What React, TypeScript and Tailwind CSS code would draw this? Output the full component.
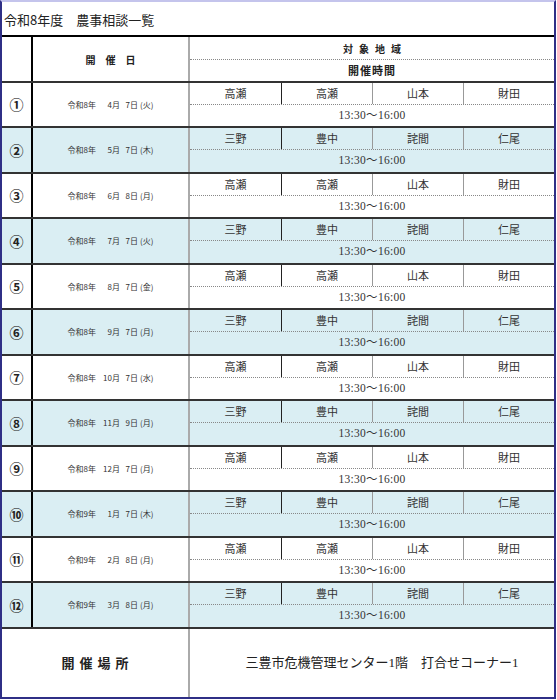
const sans = "font-['Noto_Sans_CJK_JP','Noto_Sans',sans-serif]";
const serif = "font-['Liberation_Serif','Noto_Sans_CJK_JP',serif]";

const schedule = [
  { no: "①", era: 8, month: 4, day: 7, week: "火" },
  { no: "②", era: 8, month: 5, day: 7, week: "木" },
  { no: "③", era: 8, month: 6, day: 8, week: "月" },
  { no: "④", era: 8, month: 7, day: 7, week: "火" },
  { no: "⑤", era: 8, month: 8, day: 7, week: "金" },
  { no: "⑥", era: 8, month: 9, day: 7, week: "月" },
  { no: "⑦", era: 8, month: 10, day: 7, week: "水" },
  { no: "⑧", era: 8, month: 11, day: 9, week: "月" },
  { no: "⑨", era: 8, month: 12, day: 7, week: "月" },
  { no: "⑩", era: 9, month: 1, day: 7, week: "木" },
  { no: "⑪", era: 9, month: 2, day: 8, week: "月" },
  { no: "⑫", era: 9, month: 3, day: 8, week: "月" },
];

const westAreas = ["高瀬", "高瀬", "山本", "財田"];
const eastAreas = ["三野", "豊中", "詫間", "仁尾"];

const ScheduleRow = ({ item, index }: { item: (typeof schedule)[0]; index: number }) => {
  const shaded = index % 2 === 1;
  const areas = shaded ? eastAreas : westAreas;
  return (
    <div
      className={`flex shrink-0 border-b-2 border-[#333] ${shaded ? "h-[46px] bg-[#daeef3]" : "h-[45px]"}`}
    >
      <div className="w-[31px] shrink-0 border-r-2 border-black flex items-center justify-center text-[14px] font-bold text-[#222]">
        {item.no}
      </div>
      <div className="w-[157px] shrink-0 border-r-2 border-[#aaa] flex items-center justify-center text-[8px] text-[#333] whitespace-pre">
        <span>令和{item.era}年</span>
        <span className="inline-block w-[16px] text-right">{item.month}</span>
        <span>月</span>
        <span className="inline-block w-[10px] text-right">{item.day}</span>
        <span>日</span>
        <span className="ml-[2px]">({item.week})</span>
      </div>
      <div className="flex-1 flex flex-col">
        <div className="h-[22px] shrink-0 grid grid-cols-4 border-b border-dotted border-[#888]">
          {areas.map((a, i) => (
            <div
              key={i}
              className={`flex items-center justify-center text-[11px] text-[#333] ${
                i === 1 ? "border-l border-[#222]" : i > 1 ? "border-l border-[#999]" : ""
              }`}
            >
              {a}
            </div>
          ))}
        </div>
        <div className={`flex-1 flex items-center justify-center text-[11.5px] tracking-[0.3px] text-[#333] ${serif}`}>
          13:30〜16:00
        </div>
      </div>
    </div>
  );
};

export default function App() {
  return (
    <div
      className={`w-[556px] h-[699px] flex flex-col bg-white border-t-2 border-t-[#c4c4ec] border-l-2 border-r-2 border-b-2 border-l-[#2f2f86] border-r-[#2f2f86] border-b-[#2f2f86] ${sans}`}
    >
      {/* title */}
      <div className="h-[35px] shrink-0 border-b-2 border-black flex items-center pl-[2px] pt-[2px] text-[13px] text-[#222]">
        令和8年度　農事相談一覧
      </div>

      {/* header */}
      <div className="h-[46px] shrink-0 flex border-b-2 border-[#333]">
        <div className="w-[31px] shrink-0 border-r-2 border-black" />
        <div className="w-[157px] shrink-0 border-r-2 border-[#aaa] flex items-center justify-center text-[10px] font-bold text-[#222]">
          開　催　日
        </div>
        <div className="flex-1 flex flex-col">
          <div className="h-[23px] shrink-0 border-b border-dotted border-[#888] flex items-center justify-center text-[10px] font-bold tracking-[6px] pl-[6px] text-[#222]">
            対象地域
          </div>
          <div className="flex-1 flex items-center justify-center text-[11px] font-bold tracking-[1px] text-[#222]">
            開催時間
          </div>
        </div>
      </div>

      {/* rows */}
      <div className="flex flex-col shrink-0">
        {schedule.map((item, i) => (
          <ScheduleRow key={i} item={item} index={i} />
        ))}
      </div>

      {/* footer */}
      <div className="flex-1 flex">
        <div className="w-[188px] shrink-0 border-r-2 border-[#aaa] flex items-center justify-center text-[13px] font-semibold tracking-[5px] pl-[5px] text-[#222]">
          開催場所
        </div>
        <div className={`flex-1 flex items-center justify-center pl-[20px] text-[13px] text-[#222] ${serif}`}>
          三豊市危機管理センター1階　打合せコーナー1
        </div>
      </div>
    </div>
  );
}
